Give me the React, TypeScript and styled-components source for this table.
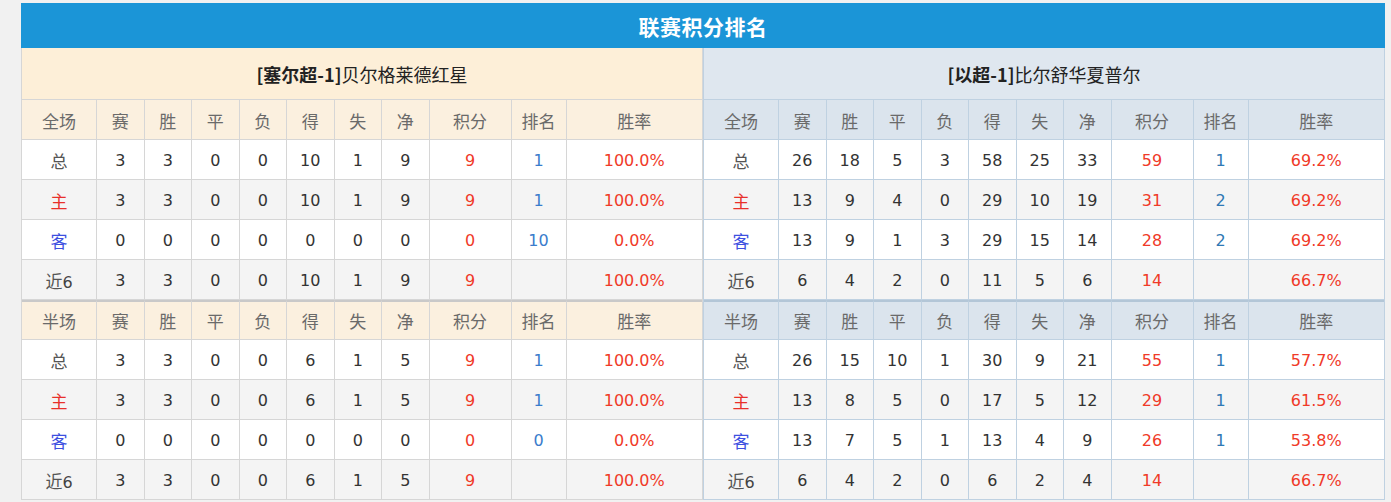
import styled, { createGlobalStyle } from 'styled-components';

const GlobalStyle = createGlobalStyle`
  body {
    margin: 0;
    background: #f1f1f1;
    font-family: "Noto Sans CJK SC", "DejaVu Sans", sans-serif;
  }
`;

type Side = 'home' | 'away';

const palette = {
  home: { team: '#fdefd8', head: '#fbf0df', line: '#d6d6d6', sep: '#c9c9c9', rank: '#3a7ccc' },
  away: { team: '#dfe7ef', head: '#dbe4ed', line: '#bfd1e1', sep: '#b3c6d7', rank: '#2f78b4' },
};

const Board = styled.div`
  width: 1364px;
  margin: 3px 0 0 21px;
`;

const TitleBar = styled.div`
  height: 45px;
  background: #1b95d7;
  color: #fff;
  font-size: 21px;
  font-weight: 700;
  display: flex;
  align-items: center;
  justify-content: center;
  letter-spacing: 0.5px;
`;

const Panels = styled.div`
  display: flex;
`;

const Panel = styled.div<{ $side: Side }>`
  width: 682px;
  box-sizing: border-box;
  border-left: 1px solid ${p => palette[p.$side].line};
  border-right: 1px solid ${p => palette[p.$side].line};
`;

const TeamHead = styled.div<{ $side: Side }>`
  height: 52px;
  box-sizing: border-box;
  background: ${p => palette[p.$side].team};
  border-bottom: 1px solid ${p => palette[p.$side].line};
  display: flex;
  align-items: center;
  justify-content: center;
  font-size: 18px;
  color: #222;
`;

const League = styled.span`
  font-weight: 700;
`;

const Grid = styled.div`
  display: grid;
  grid-template-columns: 75px repeat(7, 47.5px) 82px 55px 1fr;
`;

const Cell = styled.div<{ $side: Side; $bg: string; $sep?: boolean; $last?: boolean }>`
  height: 40px;
  box-sizing: border-box;
  display: flex;
  align-items: center;
  justify-content: center;
  background: ${p => p.$bg};
  border-bottom: 1px solid ${p => palette[p.$side].line};
  border-right: ${p => (p.$last ? 'none' : `1px solid ${palette[p.$side].line}`)};
  border-top: ${p => (p.$sep ? `2px solid ${palette[p.$side].sep}` : 'none')};
  padding-top: ${p => (p.$sep ? '0' : '1px')};
`;

const HeadText = styled.span`
  font-size: 17px;
  color: #6a6a6a;
`;

const Label = styled.span<{ $tone: string }>`
  font-size: 17px;
  color: ${p => p.$tone};
`;

const Num = styled.span<{ $tone: string }>`
  font-family: "DejaVu Sans", "Liberation Sans", sans-serif;
  font-size: 16px;
  color: ${p => p.$tone};
`;

const heads = ['赛', '胜', '平', '负', '得', '失', '净', '积分', '排名', '胜率'];

type Row = [string, ...(string | number)[]];

const labelTone: Record<string, string> = {
  总: '#555',
  主: '#e8302a',
  客: '#3d4fe0',
  近: '#555',
};

const Section = ({ side, title, rows, sep }: { side: Side; title: string; rows: Row[]; sep?: boolean }) => {
  const c = palette[side];
  return (
    <>
      <Cell $side={side} $bg={c.head} $sep={sep}>
        <HeadText>{title}</HeadText>
      </Cell>
      {heads.map((h, i) => (
        <Cell key={h} $side={side} $bg={c.head} $sep={sep} $last={i === heads.length - 1}>
          <HeadText>{h}</HeadText>
        </Cell>
      ))}
      {rows.map((row, r) => {
        const bg = r % 2 === 1 ? '#f4f4f4' : '#fff';
        const [label, ...vals] = row;
        return [
          <Cell key={`${r}-l`} $side={side} $bg={bg}>
            {label === '近6' ? (
              <Label $tone="#555">
                近<Num $tone="#444">6</Num>
              </Label>
            ) : (
              <Label $tone={labelTone[label]}>{label}</Label>
            )}
          </Cell>,
          ...vals.map((v, i) => {
            const tone = i === 7 || i === 9 ? '#f03a28' : i === 8 ? c.rank : '#333';
            return (
              <Cell key={`${r}-${i}`} $side={side} $bg={bg} $last={i === vals.length - 1}>
                <Num $tone={tone}>{v}</Num>
              </Cell>
            );
          }),
        ];
      })}
    </>
  );
};

const Standing = ({
  side,
  league,
  team,
  full,
  half,
}: {
  side: Side;
  league: string;
  team: string;
  full: Row[];
  half: Row[];
}) => (
  <Panel $side={side}>
    <TeamHead $side={side}>
      <League>[{league}]</League>
      {team}
    </TeamHead>
    <Grid>
      <Section side={side} title="全场" rows={full} />
      <Section side={side} title="半场" rows={half} sep />
    </Grid>
  </Panel>
);

const homeFull: Row[] = [
  ['总', 3, 3, 0, 0, 10, 1, 9, 9, 1, '100.0%'],
  ['主', 3, 3, 0, 0, 10, 1, 9, 9, 1, '100.0%'],
  ['客', 0, 0, 0, 0, 0, 0, 0, 0, 10, '0.0%'],
  ['近6', 3, 3, 0, 0, 10, 1, 9, 9, '', '100.0%'],
];
const homeHalf: Row[] = [
  ['总', 3, 3, 0, 0, 6, 1, 5, 9, 1, '100.0%'],
  ['主', 3, 3, 0, 0, 6, 1, 5, 9, 1, '100.0%'],
  ['客', 0, 0, 0, 0, 0, 0, 0, 0, 0, '0.0%'],
  ['近6', 3, 3, 0, 0, 6, 1, 5, 9, '', '100.0%'],
];
const awayFull: Row[] = [
  ['总', 26, 18, 5, 3, 58, 25, 33, 59, 1, '69.2%'],
  ['主', 13, 9, 4, 0, 29, 10, 19, 31, 2, '69.2%'],
  ['客', 13, 9, 1, 3, 29, 15, 14, 28, 2, '69.2%'],
  ['近6', 6, 4, 2, 0, 11, 5, 6, 14, '', '66.7%'],
];
const awayHalf: Row[] = [
  ['总', 26, 15, 10, 1, 30, 9, 21, 55, 1, '57.7%'],
  ['主', 13, 8, 5, 0, 17, 5, 12, 29, 1, '61.5%'],
  ['客', 13, 7, 5, 1, 13, 4, 9, 26, 1, '53.8%'],
  ['近6', 6, 4, 2, 0, 6, 2, 4, 14, '', '66.7%'],
];

export default function App() {
  return (
    <>
      <GlobalStyle />
      <Board>
        <TitleBar>联赛积分排名</TitleBar>
        <Panels>
          <Standing side="home" league="塞尔超-1" team="贝尔格莱德红星" full={homeFull} half={homeHalf} />
          <Standing side="away" league="以超-1" team="比尔舒华夏普尔" full={awayFull} half={awayHalf} />
        </Panels>
      </Board>
    </>
  );
}
